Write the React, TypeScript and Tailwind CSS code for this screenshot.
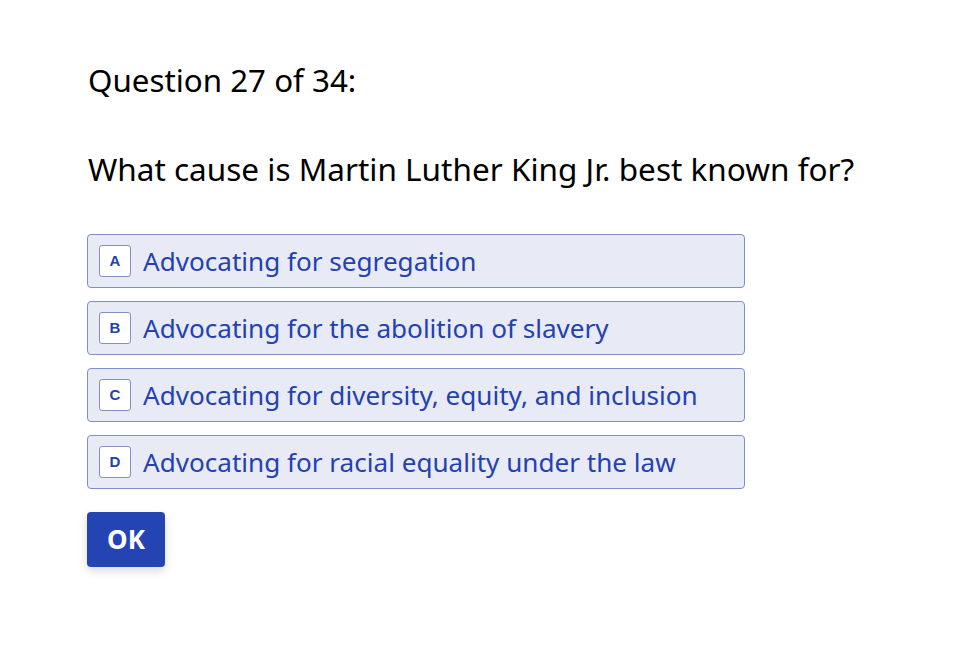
import React from 'react';

const options = [
  { key: 'A', text: 'Advocating for segregation' },
  { key: 'B', text: 'Advocating for the abolition of slavery' },
  { key: 'C', text: 'Advocating for diversity, equity, and inclusion' },
  { key: 'D', text: 'Advocating for racial equality under the law' },
];

export default function App() {
  return (
    <div className="min-h-screen bg-white pl-[87px] pt-[58px]" style={{ fontFamily: '"Noto Sans", "Open Sans", sans-serif' }}>
      <h1 className="pl-px text-[31.3px] leading-[44px] text-black">Question 27 of 34:</h1>
      <p className="mt-[45px] pl-px text-[31.5px] leading-[44px] text-black">What cause is Martin Luther King Jr. best known for?</p>

      <div className="mt-[43px] flex w-[658px] flex-col gap-[13px]">
        {options.map(o => (
          <button
            key={o.key}
            className="flex h-[54px] items-center gap-[12px] rounded-[4px] border border-[#7d8fcb] bg-[#e8ebf6] px-[11px] text-left"
          >
            <span
              className="flex h-[32px] w-[32px] shrink-0 items-center justify-center rounded-[3px] border border-[#8391c2] bg-white text-[15px] font-bold text-[#2441a8]"
              style={{ fontFamily: '"Liberation Sans", Arial, sans-serif' }}
            >
              {o.key}
            </span>
            <span className="text-[26.1px] leading-none text-[#2441b0]">{o.text}</span>
          </button>
        ))}
      </div>

      <button className="mt-[23px] h-[55px] w-[78px] rounded-[4px] bg-[#2544b4] text-[26px] font-bold text-white shadow-[0_4px_10px_rgba(0,0,0,0.15)]">
        OK
      </button>
    </div>
  );
}
